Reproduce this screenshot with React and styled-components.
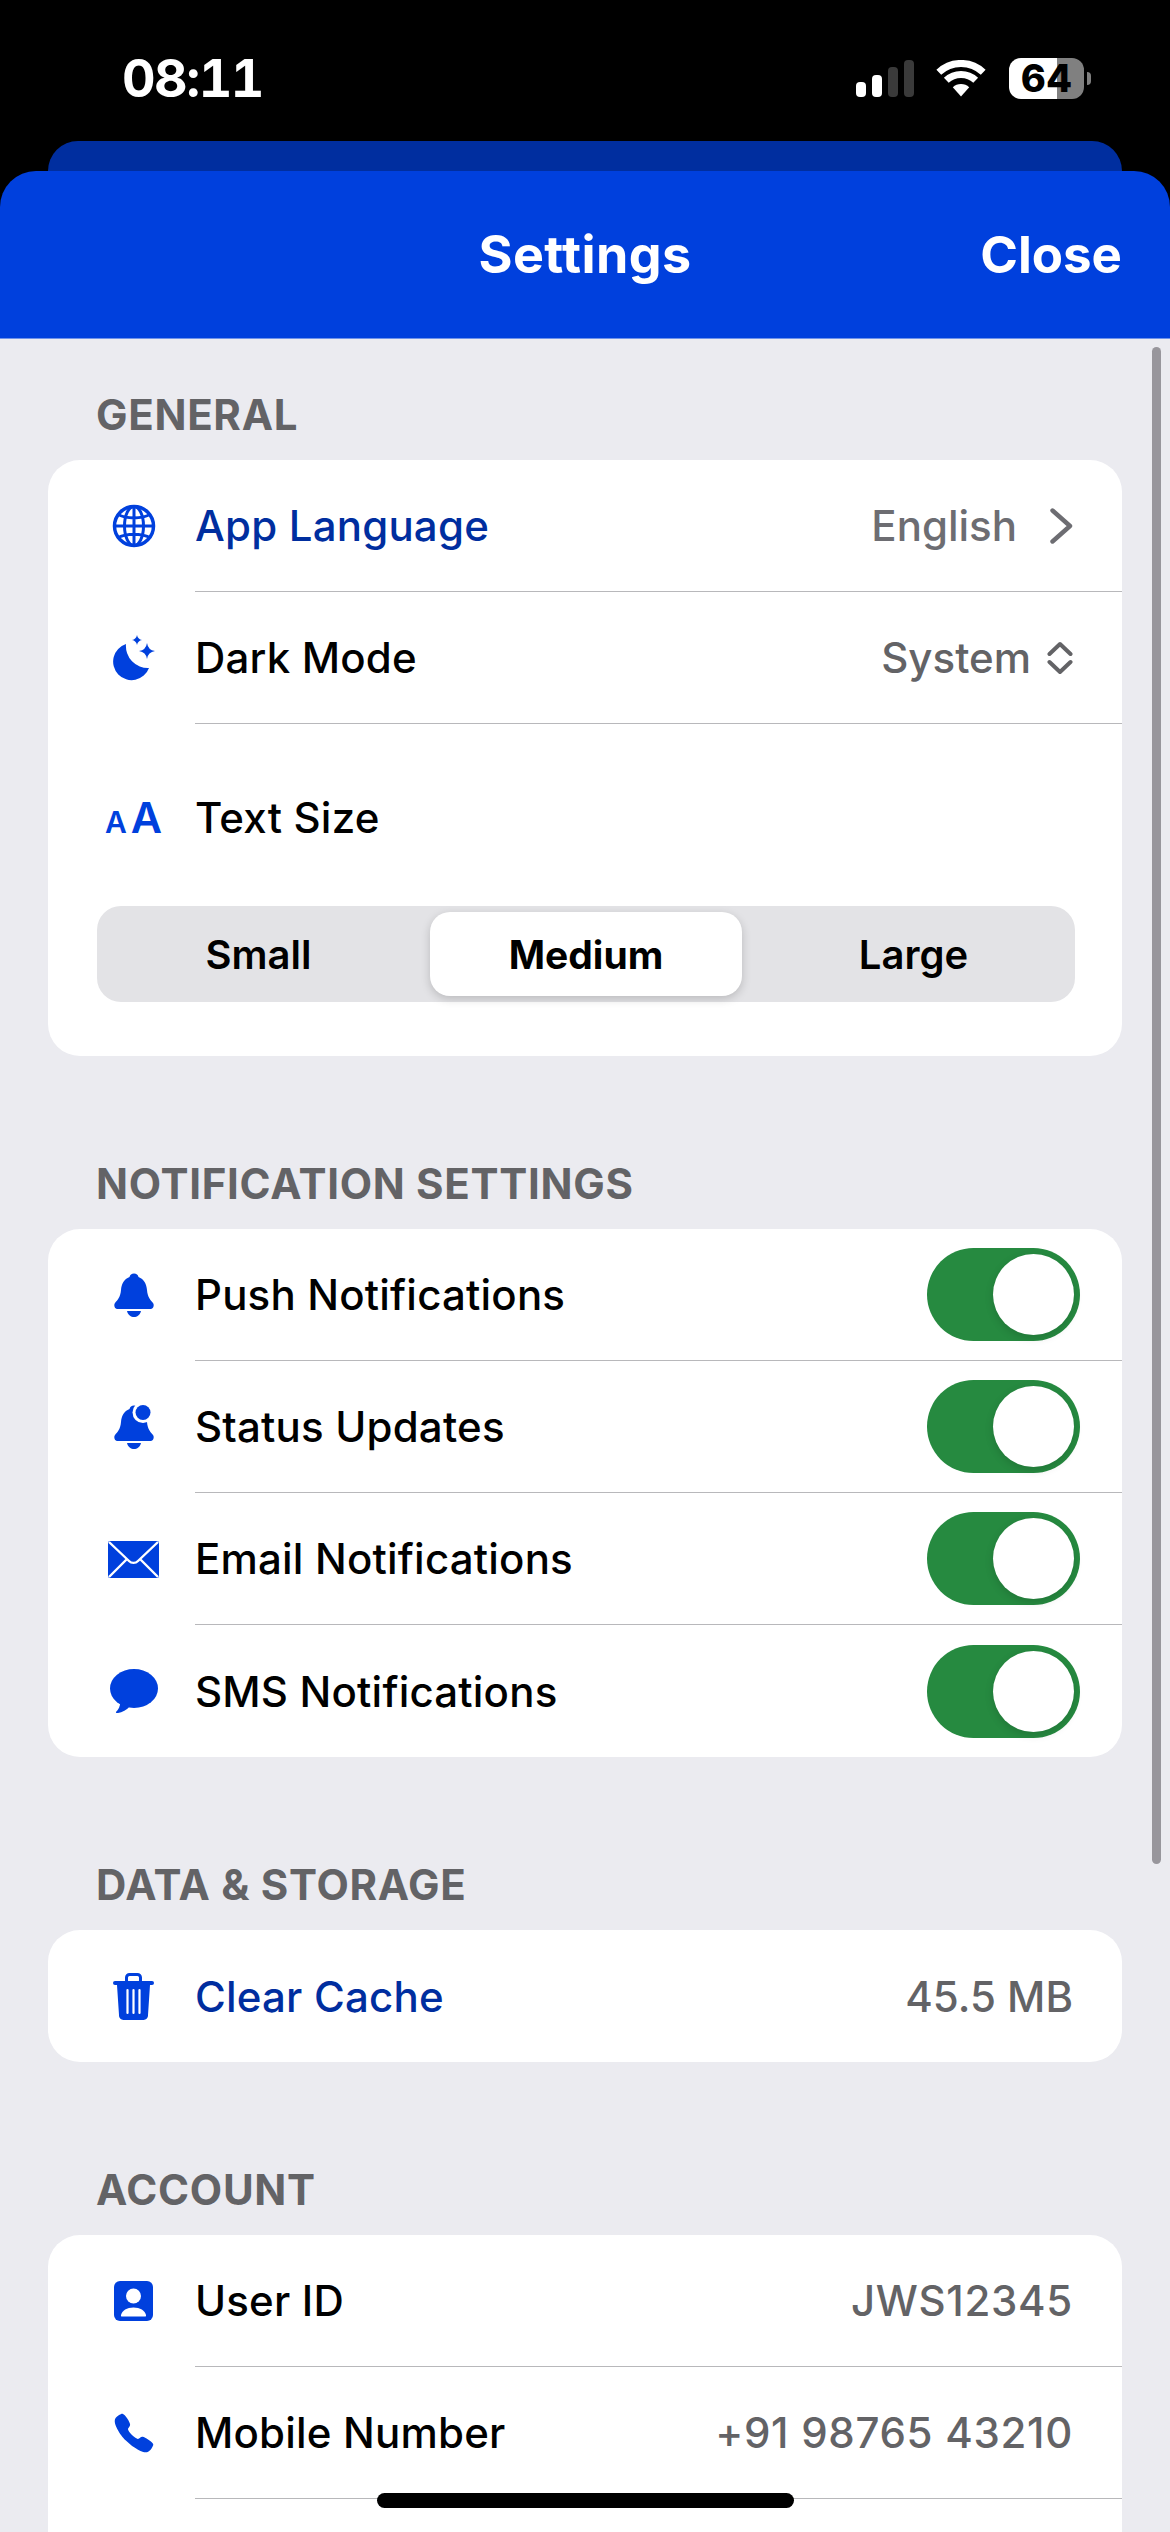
import React from "react";
import styled, { createGlobalStyle } from "styled-components";
import { IoCall } from "react-icons/io5";

const BLUE = "#0040dd";

function Globe() {
  return (
    <svg width="44" height="44" viewBox="0 0 44 44" fill="none" stroke={BLUE} strokeWidth="3">
      <circle cx="22" cy="22" r="19.5" strokeWidth="3.5" />
      <ellipse cx="22" cy="22" rx="9.5" ry="19.5" />
      <path d="M22 2.5V41.5M2.5 22H41.5M6 10.5C15 15 29 15 38 10.5M6 33.5C15 29 29 29 38 33.5" />
    </svg>
  );
}

function Moon() {
  return (
    <svg width="44" height="46" viewBox="0 0 44 46" fill={BLUE}>
      <path d="M14 9A18.5 18.5 0 1 0 37 33A22 22 0 0 1 14 9Z" />
      <path d="M35 8Q36 15 43 16Q36 17 35 24Q34 17 27 16Q34 15 35 8Z" />
      <path d="M25 0Q25.8 4.2 30 5Q25.8 5.8 25 10Q24.2 5.8 20 5Q24.2 4.2 25 0Z" />
    </svg>
  );
}

function Bell({ dot }) {
  return (
    <svg width="40" height="44" viewBox="0 0 40 44" fill={BLUE}>
      <path d="M20 .5C17.5 .5 16 2 15.5 4C10 6 7.5 11 7 17C6.5 24 3.5 27 1 30C-.5 32 .5 36 3 36H37C39.5 36 40.5 32 39 30C36.5 27 33.5 24 33 17C32.5 11 30 6 24.5 4C24 2 22.5 .5 20 .5Z" />
      <path d="M13 38H27C26 42 23 44 20 44C17 44 14 42 13 38Z" />
      {dot && <circle cx="29" cy="7.5" r="10.5" fill="#fff" />}
      {dot && <circle cx="29" cy="7.5" r="7.5" />}
    </svg>
  );
}

function Envelope() {
  return (
    <svg width="51" height="37" viewBox="0 0 51 37">
      <rect width="51" height="37" rx="2" fill={BLUE} />
      <path d="M1 1L21 20C23.5 22.5 27.5 22.5 30 20L50 1M1 36L18.5 18.5M50 36L32.5 18.5" fill="none" stroke="#fff" strokeWidth="2.4" />
    </svg>
  );
}

function Bubble() {
  return (
    <svg width="48" height="44" viewBox="0 0 48 44" fill={BLUE}>
      <ellipse cx="24" cy="19.5" rx="24" ry="19.5" />
      <path d="M10 30C11 36 9 40 6 43C5.5 44 7 44.3 8 44C12 43.5 17 41 20 37Z" />
    </svg>
  );
}

function Trash() {
  return (
    <svg width="41" height="47" viewBox="0 0 41 47" fill={BLUE}>
      <rect x="13.5" y="1.5" width="14" height="9" rx="3" fill="none" stroke={BLUE} strokeWidth="3" />
      <rect y="8" width="41" height="4" rx="2" />
      <path d="M4 12H37L35 42A4.5 4.5 0 0 1 30.5 47H10.5A4.5 4.5 0 0 1 6 42Z" />
      <path d="M14.5 17V40M20.5 17V40M26.5 17V40" stroke="#fff" strokeWidth="2.2" strokeLinecap="round" />
    </svg>
  );
}

function UserCard() {
  return (
    <svg width="39" height="40" viewBox="0 0 39 40">
      <rect width="39" height="40" rx="6" fill={BLUE} />
      <circle cx="19.5" cy="15" r="7.5" fill="#fff" />
      <path d="M7 34C8 29.5 13 26.5 19.5 26.5C26 26.5 31 29.5 32 34C32.2 35 31.8 35.5 31 35.5H8C7.2 35.5 6.8 35 7 34Z" fill="#fff" />
    </svg>
  );
}

function Chevron() {
  return (
    <svg width="24" height="38" viewBox="0 0 24 38" fill="none" stroke="#6d6d72" strokeWidth="4.4" strokeLinecap="round" strokeLinejoin="round">
      <path d="M3.5 3.5L21 19L3.5 34.5" />
    </svg>
  );
}

function UpDown() {
  return (
    <svg width="26" height="34" viewBox="0 0 26 34" fill="none" stroke="#636366" strokeWidth="4" strokeLinecap="round" strokeLinejoin="round">
      <path d="M2.5 13L13 3L23.5 13M2.5 21L13 31L23.5 21" />
    </svg>
  );
}

function Wifi() {
  return (
    <svg width="50" height="37" viewBox="0 0 50 37" fill="none" stroke="#fff" strokeWidth="7">
      <path d="M2.8 12.2A32.5 32.5 0 0 1 47.2 12.2" />
      <path d="M10.3 20.3A21.5 21.5 0 0 1 39.7 20.3" />
      <path d="M25 36.5L16.8 27.2A12 12 0 0 1 33.2 27.2Z" fill="#fff" stroke="none" />
    </svg>
  );
}

function Toggle() {
  return (
    <Track>
      <Thumb />
    </Track>
  );
}

function App() {
  return (
    <Page>
      <GlobalStyle />
      <StatusBar>
        <Time>08:11</Time>
        <StatusIcons>
          <Signal>
            <SignalBar $h={15} $on />
            <SignalBar $h={22} $on />
            <SignalBar $h={30} />
            <SignalBar $h={37} />
          </Signal>
          <Wifi />
          <Battery>64</Battery>
          <BatteryNub />
        </StatusIcons>
      </StatusBar>
      <BackSheet />
      <Header>
        <span />
        <HeaderTitle>Settings</HeaderTitle>
        <CloseLink>Close</CloseLink>
      </Header>
      <Content>
        <Section>
          <SectionLabel>GENERAL</SectionLabel>
          <Card>
            <Row>
              <IconSlot><Globe /></IconSlot>
              <RowBody $divider>
                <RowLabel $link>App Language</RowLabel>
                <RowValue $gap={32} $first>English<Chevron /></RowValue>
              </RowBody>
            </Row>
            <Row>
              <IconSlot><Moon /></IconSlot>
              <RowBody $divider>
                <RowLabel>Dark Mode</RowLabel>
                <RowValue $gap={16}>System<UpDown /></RowValue>
              </RowBody>
            </Row>
            <TextSizeRow>
              <IconSlot>
                <SmallA>A</SmallA>
                <BigA>A</BigA>
              </IconSlot>
              <RowLabel>Text Size</RowLabel>
            </TextSizeRow>
            <Segments>
              <Segment>Small</Segment>
              <Segment $active>Medium</Segment>
              <Segment>Large</Segment>
            </Segments>
          </Card>
        </Section>
        <Section>
          <SectionLabel>NOTIFICATION SETTINGS</SectionLabel>
          <Card>
            <Row>
              <IconSlot><Bell /></IconSlot>
              <RowBody $divider>
                <RowLabel>Push Notifications</RowLabel>
                <Toggle />
              </RowBody>
            </Row>
            <Row>
              <IconSlot><Bell dot /></IconSlot>
              <RowBody $divider>
                <RowLabel>Status Updates</RowLabel>
                <Toggle />
              </RowBody>
            </Row>
            <Row>
              <IconSlot><Envelope /></IconSlot>
              <RowBody $divider>
                <RowLabel>Email Notifications</RowLabel>
                <Toggle />
              </RowBody>
            </Row>
            <Row>
              <IconSlot><Bubble /></IconSlot>
              <RowBody>
                <RowLabel>SMS Notifications</RowLabel>
                <Toggle />
              </RowBody>
            </Row>
          </Card>
        </Section>
        <Section>
          <SectionLabel>DATA &amp; STORAGE</SectionLabel>
          <Card>
            <Row>
              <IconSlot><Trash /></IconSlot>
              <RowBody>
                <RowLabel $link>Clear Cache</RowLabel>
                <RowValue>45.5 MB</RowValue>
              </RowBody>
            </Row>
          </Card>
        </Section>
        <Section>
          <SectionLabel>ACCOUNT</SectionLabel>
          <Card>
            <Row>
              <IconSlot><UserCard /></IconSlot>
              <RowBody $divider>
                <RowLabel>User ID</RowLabel>
                <RowValue $spaced>JWS12345</RowValue>
              </RowBody>
            </Row>
            <Row>
              <IconSlot><IoCall size={44} color={BLUE} /></IconSlot>
              <RowBody $divider>
                <RowLabel>Mobile Number</RowLabel>
                <RowValue $spaced>+91 98765 43210</RowValue>
              </RowBody>
            </Row>
            <Row />
          </Card>
        </Section>
      </Content>
      <ScrollThumb />
      <HomeBar />
    </Page>
  );
}

const GlobalStyle = createGlobalStyle`
  html, body {
    margin: 0;
    padding: 0;
    background: #000;
  }
  * {
    box-sizing: border-box;
  }
`;

const Page = styled.div`
  position: relative;
  width: 1170px;
  height: 2532px;
  overflow: hidden;
  background: #000;
  font-family: Inter, "Liberation Sans", sans-serif;
`;

const StatusBar = styled.div`
  height: 141px;
  padding: 15px 79px 0 122px;
  display: flex;
  align-items: center;
  justify-content: space-between;
`;

const Time = styled.div`
  color: #fff;
  font-size: 52px;
  font-weight: 700;
  letter-spacing: -1.5px;
  font-variant-numeric: tabular-nums;
`;

const StatusIcons = styled.div`
  display: flex;
  align-items: center;
`;

const Signal = styled.div`
  display: flex;
  align-items: flex-end;
  gap: 6px;
  margin-right: 22px;
`;

const SignalBar = styled.div`
  width: 10px;
  height: ${(p) => p.$h}px;
  border-radius: 4px;
  background: ${(p) => (p.$on ? "#fff" : "#3a3a3a")};
`;

const Battery = styled.div`
  width: 75px;
  height: 41px;
  margin-left: 23px;
  border-radius: 12px;
  display: flex;
  align-items: center;
  justify-content: center;
  background: linear-gradient(90deg, #fff 64%, #808080 64%);
  color: #000;
  font-size: 38px;
  font-weight: 800;
`;

const BatteryNub = styled.div`
  width: 4px;
  height: 13px;
  margin-left: 3px;
  border-radius: 0 4px 4px 0;
  background: #808080;
`;

const BackSheet = styled.div`
  height: 40px;
  margin: 0 48px -10px;
  border-radius: 30px 30px 0 0;
  background: #002e9f;
`;

const Header = styled.div`
  position: relative;
  height: 168px;
  padding: 0 48px;
  display: grid;
  grid-template-columns: 1fr auto 1fr;
  align-items: center;
  border-radius: 36px 36px 0 0;
  border-bottom: 1px solid #6f93ea;
  background: ${BLUE};
  color: #fff;
  font-size: 52px;
  font-weight: 700;
`;

const HeaderTitle = styled.div`
  text-align: center;
  letter-spacing: 0.4px;
`;

const CloseLink = styled.div`
  text-align: right;
  font-size: 51px;
`;

const Content = styled.div`
  height: 2193px;
  padding-top: 53px;
  display: flex;
  flex-direction: column;
  gap: 105px;
  background: #ebebf0;
`;

const Section = styled.section`
  display: flex;
  flex-direction: column;
  gap: 22px;
`;

const SectionLabel = styled.div`
  height: 46px;
  padding-left: 96px;
  line-height: 46px;
  color: #636366;
  font-size: 42px;
  font-weight: 700;
  letter-spacing: 0.7px;
`;

const Card = styled.div`
  margin: 0 48px;
  border-radius: 32px;
  background: #fff;
`;

const Row = styled.div`
  height: 132px;
  padding-left: 24px;
  display: flex;
  align-items: center;
`;

const IconSlot = styled.div`
  width: 123px;
  flex: none;
  display: flex;
  align-items: baseline;
  justify-content: center;
`;

const RowBody = styled.div`
  flex: 1;
  height: 100%;
  padding-right: 49px;
  display: flex;
  align-items: center;
  justify-content: space-between;
  border-bottom: ${(p) => (p.$divider ? "1px solid #b8b8bb" : "none")};
`;

const RowLabel = styled.div`
  color: ${(p) => (p.$link ? "#002e9f" : "#000")};
  font-size: 42px;
  font-weight: 500;
  letter-spacing: 0.2px;
`;

const RowValue = styled.div`
  display: flex;
  align-items: center;
  gap: ${(p) => p.$gap || 0}px;
  color: ${(p) => (p.$first ? "#6d6d72" : "#636366")};
  font-size: 42px;
  font-weight: 500;
  letter-spacing: ${(p) => (p.$spaced ? 0.7 : 0)}px;
`;

const TextSizeRow = styled(Row)`
  height: 182px;
  padding-top: 4px;
`;

const SmallA = styled.span`
  margin-right: 4px;
  color: ${BLUE};
  font-size: 30px;
  line-height: 1;
  font-weight: 600;
`;

const BigA = styled.span`
  color: ${BLUE};
  font-size: 43px;
  line-height: 1;
  font-weight: 600;
`;

const Segments = styled.div`
  height: 96px;
  margin: 0 47px 54px 49px;
  padding: 6px 0;
  display: grid;
  grid-template-columns: 1fr 312px 1fr;
  border-radius: 24px;
  background: #e3e3e6;
`;

const Segment = styled.div`
  display: flex;
  align-items: center;
  justify-content: center;
  border-radius: 20px;
  color: #000;
  font-size: ${(p) => (p.$active ? 39 : 40)}px;
  font-weight: ${(p) => (p.$active ? 700 : 600)};
  background: ${(p) => (p.$active ? "#fff" : "transparent")};
  box-shadow: ${(p) => (p.$active ? "0 3px 10px rgba(0,0,0,0.18)" : "none")};

  &:first-child {
    padding-right: 10px;
  }
  &:last-child {
    padding-left: 10px;
  }
`;

const Track = styled.div`
  width: 153px;
  height: 93px;
  margin-right: -7px;
  padding: 6px;
  display: flex;
  justify-content: flex-end;
  border-radius: 47px;
  background: #268a40;
`;

const Thumb = styled.div`
  width: 81px;
  height: 81px;
  border-radius: 50%;
  background: #fff;
  box-shadow: 0 3px 8px rgba(0, 0, 0, 0.15);
`;

const ScrollThumb = styled.div`
  position: absolute;
  top: 347px;
  left: 1152px;
  width: 9px;
  height: 1517px;
  border-radius: 5px;
  background: #98969c;
`;

const HomeBar = styled.div`
  position: absolute;
  left: 377px;
  top: 2493px;
  width: 417px;
  height: 15px;
  border-radius: 8px;
  background: #000;
`;

export default App;
